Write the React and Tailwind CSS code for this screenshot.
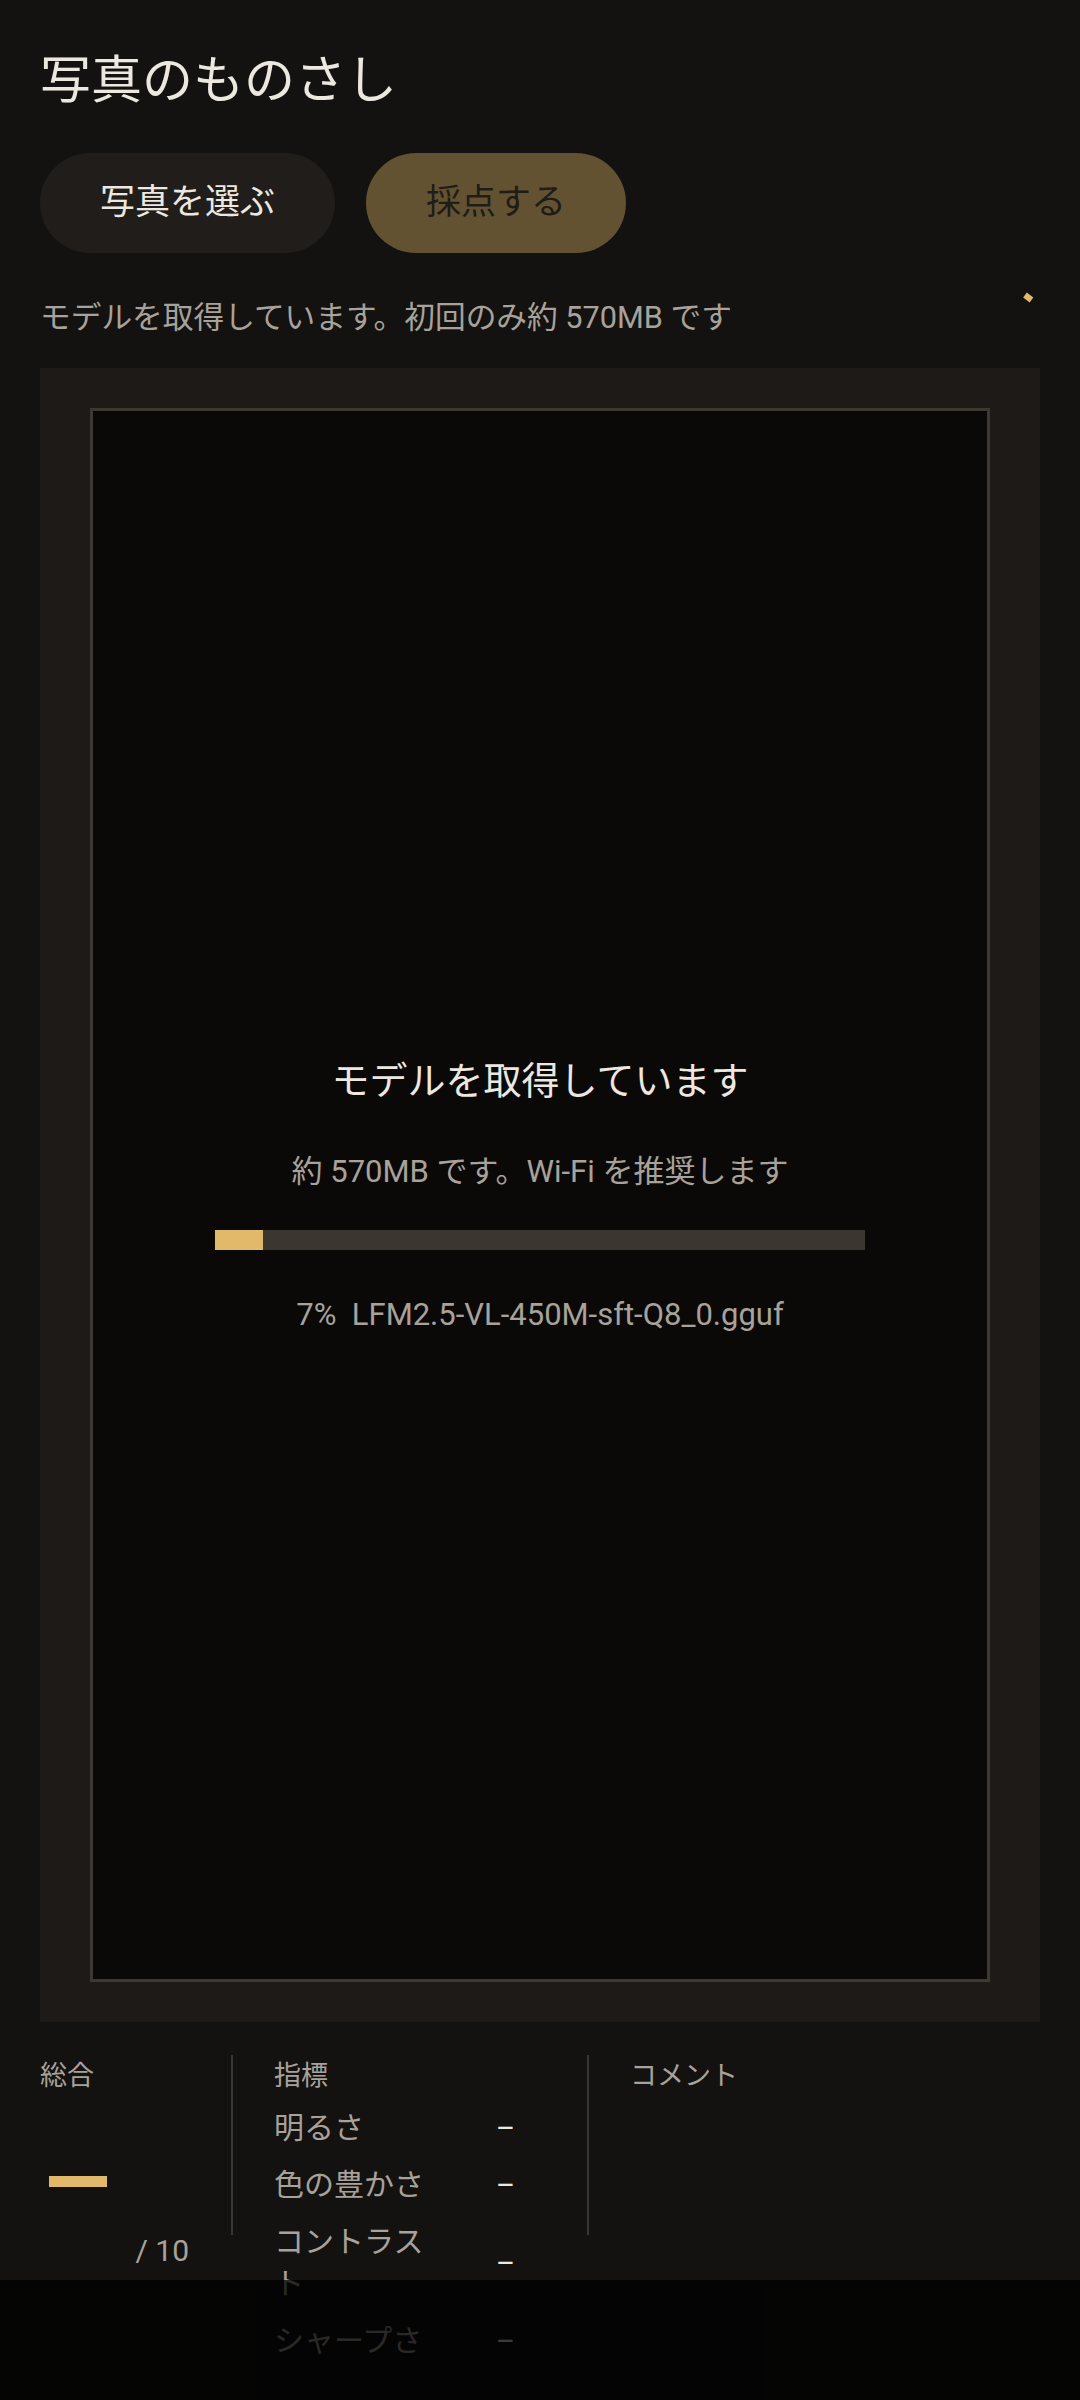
import React from "react";

const metrics = [
  { label: "明るさ", value: "–" },
  { label: "色の豊かさ", value: "–" },
  { label: "コントラスト", value: "–" },
  { label: "シャープさ", value: "–" },
];

function Spinner() {
  return (
    <svg width="56" height="56" viewBox="0 0 56 56" className="shrink-0">
      <line x1="41" y1="5" x2="47.5" y2="10" stroke="#e2b86b" strokeWidth="6" />
    </svg>
  );
}

function ScoreSection() {
  return (
    <div className="mt-[33px] flex px-[40px]">
      {/* total */}
      <div className="w-[191px] shrink-0">
        <div className="text-[27px] leading-[42px] text-[#a8a29a]">総合</div>
        <div className="mt-[79px] ml-[9px] w-[58px] h-[11px] bg-[#e2b86b]" />
        <div className="mt-[43px] pr-[42px] text-right text-[30px] leading-[42px] text-[#a8a29a]">/ 10</div>
      </div>
      <div className="w-[2px] h-[180px] bg-[#3a3631] shrink-0" />

      {/* metrics */}
      <div className="w-[354px] shrink-0 pl-[41px]">
        <div className="text-[27px] leading-[42px] text-[#a8a29a]">指標</div>
        <div className="mt-[10px] flex flex-col gap-[15px]">
          {metrics.map((m) => (
            <div key={m.label} className="flex items-center">
              <div className="w-[160px] text-[30px] leading-[42px] text-[#a8a29a]">{m.label}</div>
              <div className="ml-[62px] text-[29px] leading-[42px] text-[#ece8e0]">{m.value}</div>
            </div>
          ))}
        </div>
      </div>
      <div className="w-[2px] h-[180px] bg-[#3a3631] shrink-0" />

      {/* comment */}
      <div className="flex-1 pl-[41px]">
        <div className="text-[27px] leading-[42px] text-[#a8a29a]">コメント</div>
      </div>
    </div>
  );
}

export default function App() {
  const progress = 48;
  return (
    <div className="relative h-[2400px] overflow-hidden bg-[#131211] font-['Roboto','Noto_Sans_CJK_JP',sans-serif] text-[#ece8e0]">
      <div className="px-[40px] pt-[46px]">
        <h1 className="text-[51px] leading-[70px]">写真のものさし</h1>

        <div className="mt-[37px] flex gap-[31px]">
          <button className="h-[100px] px-[60px] rounded-full bg-[#201d1a] text-[35px] text-[#ece8e0]">
            写真を選ぶ
          </button>
          <button className="h-[100px] px-[60px] rounded-full bg-[#625232] text-[35px] text-[#201c16]">
            採点する
          </button>
        </div>

        <div className="mt-[43px] h-[44px] flex items-center justify-between">
          <p className="text-[30.7px] leading-[44px] text-[#a8a29a]">
            モデルを取得しています。初回のみ約 570MB です
          </p>
          <Spinner />
        </div>
      </div>

      <div className="mx-[40px] mt-[28px] bg-[#1d1a17] px-[50px] py-[40px]">
        <div className="h-[1574px] border-[3px] border-[#3d3832] bg-[#0a0908] flex flex-col items-center justify-center">
          <div className="text-[38px] leading-[57px] text-[#ece8e0]">モデルを取得しています</div>
          <div className="mt-[39px] text-[31px] leading-[46px] text-[#a8a29a]">
            約 570MB です。Wi-Fi を推奨します
          </div>
          <div className="mt-[35px] w-[650px] h-[20px] bg-[#3b3630]">
            <div className="h-full bg-[#e2b86b]" style={{ width: progress }} />
          </div>
          <div className="mt-[42px] text-[31px] leading-[46px] text-[#a8a29a] whitespace-pre">
            {"7%  LFM2.5-VL-450M-sft-Q8_0.gguf"}
          </div>
        </div>
      </div>

      <ScoreSection />

      {/* system nav bar overlay */}
      <div className="absolute bottom-0 left-0 right-0 h-[120px] bg-black/75" />
    </div>
  );
}
